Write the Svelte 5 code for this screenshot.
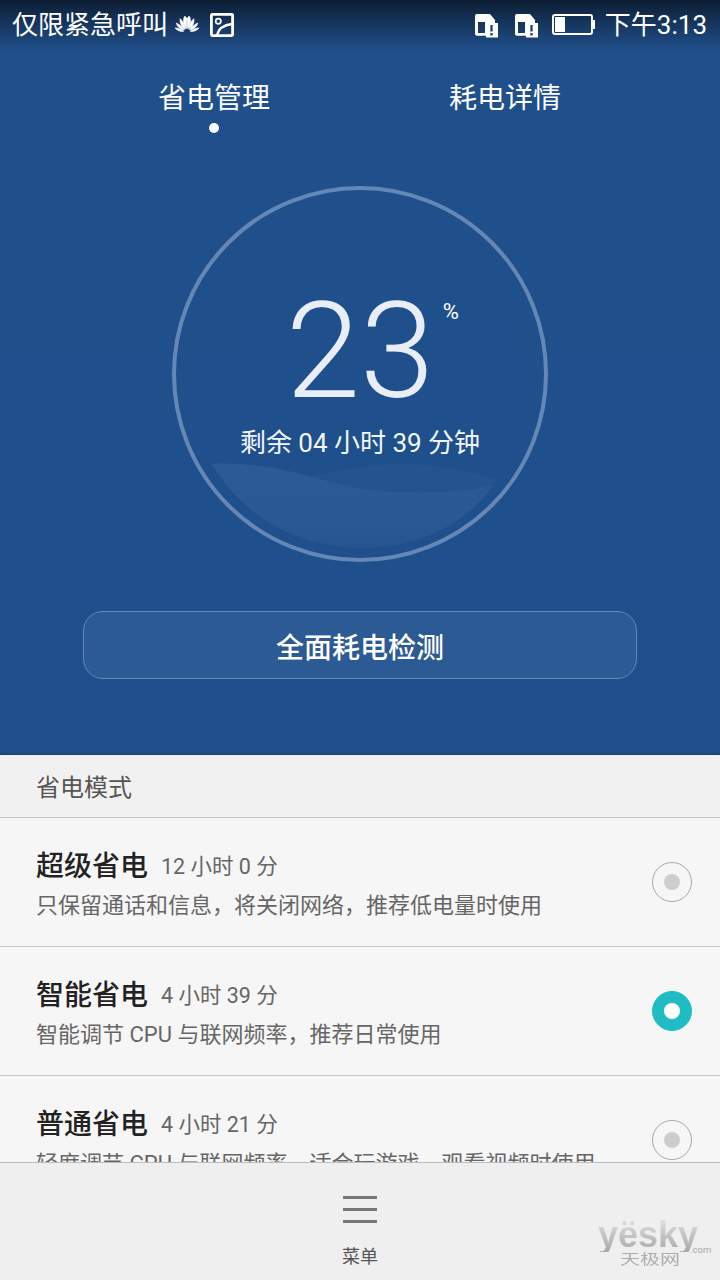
<script>
	const modes = [
		{ name: '超级省电', time: '12 小时 0 分', desc: '只保留通话和信息，将关闭网络，推荐低电量时使用', active: false },
		{ name: '智能省电', time: '4 小时 39 分', desc: '智能调节 CPU 与联网频率，推荐日常使用', active: true },
		{ name: '普通省电', time: '4 小时 21 分', desc: '轻度调节 CPU 与联网频率，适合玩游戏、观看视频时使用', active: false }
	];

	// left half of the logo, mirrored for the right half
	const petals = [
		'M11.500 12.500C8.500 9 7.800 4 9.500 .3 10.800 .8 11.600 1.500 11.800 3Z',
		'M10.500 13C7 11.500 4.500 7.500 5.200 2.700 7.500 4.700 9.500 8 10.500 13Z',
		'M9.500 14C6 13.500 2.500 11.500 1.200 7 4.500 8.500 7.500 11 9.500 14Z',
		'M8.800 15.300C5.500 15.800 2.500 14.800 0 12 3 12 6.500 13.300 8.800 15.300Z'
	];
</script>

{#snippet simAlert()}
	<svg class="sim" width="24" height="24" viewBox="0 0 24 24">
		<path
			fill-rule="evenodd"
			d="M2 0H15L20 6V9H23V23.500H11V21.700H2A2 2 0 0 1 0 19.700V2A2 2 0 0 1 2 0ZM3 8V19H10V8Z"
			fill="#fff"
		/>
		<path d="M15.300 11h2.400v6.500h-2.400zM15.300 19h2.400v2.500h-2.400z" fill="#20497f" />
	</svg>
{/snippet}

<div class="page">
	<section class="hero">
		<header class="status">
			<span class="carrier">仅限紧急呼叫</span>
			<svg class="huawei" width="24" height="16" viewBox="0 0 24 16">
				{#each petals as d}
					<path {d} fill="#fff" stroke="#fff" stroke-width="0.700" />
					<path {d} fill="#fff" stroke="#fff" stroke-width="0.700" transform="matrix(-1 0 0 1 24 0)" />
				{/each}
			</svg>
			<svg class="picture" width="24" height="24" viewBox="0 0 24 24">
				<rect x="1.400" y="1.400" width="21.200" height="21.200" rx="1" fill="none" stroke="#fff" stroke-width="2.800" />
				<circle cx="8.300" cy="8.300" r="2.600" fill="none" stroke="#fff" stroke-width="1.700" />
				<path d="M7 22C8.500 16 14 12 22 11" fill="none" stroke="#fff" stroke-width="2.400" />
			</svg>
			<span class="spacer"></span>
			{@render simAlert()}
			{@render simAlert()}
			<div class="battery"><div class="level"></div></div>
			<span class="clock">下午3:13</span>
		</header>

		<nav class="tabs">
			<div class="tab">省电管理<span class="dot"></span></div>
			<div class="tab">耗电详情</div>
		</nav>

		<div class="gauge">
			<svg class="wave" width="376" height="376" viewBox="0 0 376 376">
				<defs>
					<linearGradient id="waveFill" x1="0" y1="0" x2="0" y2="1">
						<stop offset="0" stop-color="#2b5a95" />
						<stop offset="0.7" stop-color="#295893" />
						<stop offset="1" stop-color="#25548f" />
					</linearGradient>
				</defs>
				<path
					d="M40 278C70 276 110 282 141 291 170 299 200 306 235 306 270 307 300 304 321 299 305 325 260 362 191 362 125 362 70 330 40 278Z"
					fill="url(#waveFill)"
				/>
				<path
					d="M141 291C165 284 195 278 228 278 265 278 295 284 325 293L321 299C300 304 270 307 235 306 200 306 170 299 141 291Z"
					fill="#24538e"
				/>
			</svg>
			<div class="reading">
				<span class="value">23</span>
				<span class="percent">%</span>
			</div>
			<div class="remain">剩余 04 小时 39 分钟</div>
		</div>

		<button class="scan">全面耗电检测</button>
	</section>

	<div class="list">
		<div class="list-title">省电模式</div>
		{#each modes as mode}
			<div class="row">
				<div class="row-text">
					<div class="row-head">
						<span class="row-name">{mode.name}</span>
						<span class="row-time">{mode.time}</span>
					</div>
					<div class="row-desc">{mode.desc}</div>
				</div>
				<div class="radio" class:active={mode.active}><span></span></div>
			</div>
		{/each}
	</div>

	<footer class="menu">
		<div class="bars"><i></i><i></i><i></i></div>
		<span class="menu-label">菜单</span>
		<div class="mark">
			<span class="mark-logo">yësky</span>
			<span class="mark-cn">天极网</span>
			<span class="mark-com">.com</span>
		</div>
	</footer>
</div>

<style>
	:global(body) {
		margin: 0;
		background: #f6f6f6;
	}

	.page {
		display: flex;
		flex-direction: column;
		font-family: Roboto, 'Noto Sans CJK SC', sans-serif;
		height: 1280px;
		overflow: hidden;
		width: 720px;
	}

	.hero {
		align-items: center;
		background: linear-gradient(#0d1d33 0, #17365f 24px, #20508c 52px, #1f4f8c 100%);
		box-shadow: inset 0 -3px 3px -2px #173c6b;
		box-sizing: border-box;
		color: #fff;
		display: flex;
		flex: none;
		flex-direction: column;
		height: 755px;
	}

	.status {
		align-items: center;
		align-self: stretch;
		display: flex;
		font-size: 26px;
		height: 50px;
		padding: 0 13px 0 12px;
	}

	.carrier {
		line-height: 50px;
	}

	.huawei {
		margin: -2px 0 0 7px;
	}

	.picture {
		margin-left: 11px;
	}

	.spacer {
		flex: 1;
	}

	.sim {
		margin: 2px 16px 0 0;
	}

	.sim + .sim {
		margin-right: 13px;
	}

	.battery {
		border: 2px solid #fff;
		border-radius: 3px;
		box-sizing: border-box;
		height: 21px;
		margin: -1px 12px 0 0;
		padding: 1px;
		position: relative;
		width: 41px;
	}

	.battery::after {
		background: #fff;
		content: '';
		height: 9px;
		position: absolute;
		right: -4px;
		top: 4px;
		width: 2px;
	}

	.level {
		background: #fff;
		height: 100%;
		width: 10px;
	}

	.clock {
		line-height: 50px;
	}

	.tabs {
		align-self: stretch;
		box-sizing: border-box;
		display: flex;
		font-size: 28px;
		gap: 179px;
		height: 136px;
		padding: 31px 0 0 158px;
	}

	.tab {
		align-items: center;
		display: flex;
		flex-direction: column;
		height: 60px;
		line-height: 36px;
	}

	.dot {
		background: #fff;
		border-radius: 50%;
		height: 10px;
		margin-top: 6px;
		width: 10px;
	}

	.gauge {
		align-items: center;
		border: 4px solid #6487b6;
		border-radius: 50%;
		box-sizing: border-box;
		display: flex;
		flex: none;
		flex-direction: column;
		height: 376px;
		position: relative;
		width: 376px;
	}

	.wave {
		left: -4px;
		position: absolute;
		top: -4px;
	}

	.reading {
		color: #e9eef6;
		font-size: 134px;
		font-weight: 300;
		height: 150px;
		line-height: 150px;
		margin-top: 87px;
		position: relative;
	}

	.percent {
		color: #fff;
		font-size: 22px;
		font-weight: 400;
		left: 157px;
		line-height: 26px;
		position: absolute;
		top: 22px;
	}

	.remain {
		color: #f4f6fa;
		font-size: 26px;
		line-height: 36px;
		margin-top: -2px;
		position: relative;
	}

	.scan {
		background: #2c5a94;
		border: 1px solid #6488b8;
		border-radius: 20px;
		color: #fff;
		font-family: inherit;
		font-size: 28px;
		font-weight: 500;
		height: 68px;
		margin-top: 49px;
		padding: 2px 0 0;
		width: 554px;
	}

	.list {
		background: #f6f6f6;
		flex: 1;
		min-height: 0;
		overflow: hidden;
	}

	.list-title {
		background: #f1f1f2;
		border-bottom: 1px solid #c8c8c8;
		box-sizing: border-box;
		color: #555;
		font-size: 24px;
		height: 63px;
		line-height: 66px;
		padding-left: 36px;
	}

	.row {
		align-items: center;
		border-bottom: 1px solid #c8c8c8;
		box-sizing: border-box;
		display: flex;
		height: 129px;
		justify-content: space-between;
		padding: 0 28px 0 36px;
	}

	.row-text {
		padding-top: 4px;
	}

	.row-head {
		align-items: center;
		display: flex;
		gap: 13px;
		padding-top: 1px;
	}

	.row-name {
		color: #222;
		font-size: 28px;
		font-weight: 500;
		line-height: 40px;
	}

	.row-time {
		color: #666;
		font-size: 21.500px;
		margin-bottom: 6px;
	}

	.row-desc {
		color: #666;
		font-size: 22px;
		line-height: 32px;
		margin-top: 3px;
	}

	.radio {
		align-items: center;
		border: 1px solid #a8a8a8;
		border-radius: 50%;
		box-sizing: border-box;
		display: flex;
		flex: none;
		height: 40px;
		justify-content: center;
		width: 40px;
	}

	.radio span {
		background: #cdcdcd;
		border-radius: 50%;
		height: 16px;
		width: 16px;
	}

	.radio.active {
		background: #20bcc4;
		border-color: #20bcc4;
	}

	.radio.active span {
		background: #fff;
	}

	.menu {
		align-items: center;
		background: #efefef;
		border-top: 1px solid #bdbdbd;
		box-sizing: border-box;
		display: flex;
		flex: none;
		flex-direction: column;
		height: 118px;
		position: relative;
	}

	.bars {
		display: flex;
		flex-direction: column;
		gap: 9px;
		margin-top: 33px;
		width: 34px;
	}

	.bars i {
		background: #777;
		height: 3px;
	}

	.menu-label {
		color: #555;
		font-size: 18px;
		line-height: 26px;
		margin-top: 21px;
	}

	/* yesky watermark, sits over the bar */
	.mark {
		height: 60px;
		left: 598px;
		position: absolute;
		top: 50px;
		width: 116px;
	}

	.mark-logo {
		background: linear-gradient(#e2e2e2, #a8a8a8);
		-webkit-background-clip: text;
		background-clip: text;
		color: transparent;
		font-family: 'Liberation Sans', sans-serif;
		font-size: 36px;
		font-weight: 700;
		left: 0;
		line-height: 34px;
		position: absolute;
		top: 5px;
	}

	.mark-cn {
		color: #adadad;
		font-size: 20px;
		left: 22px;
		line-height: 14px;
		position: absolute;
		top: 39px;
		transform: scaleY(0.7);
	}

	.mark-com {
		color: #a8a8a8;
		font-size: 9.500px;
		left: 92px;
		line-height: 10px;
		position: absolute;
		top: 32px;
	}
</style>
